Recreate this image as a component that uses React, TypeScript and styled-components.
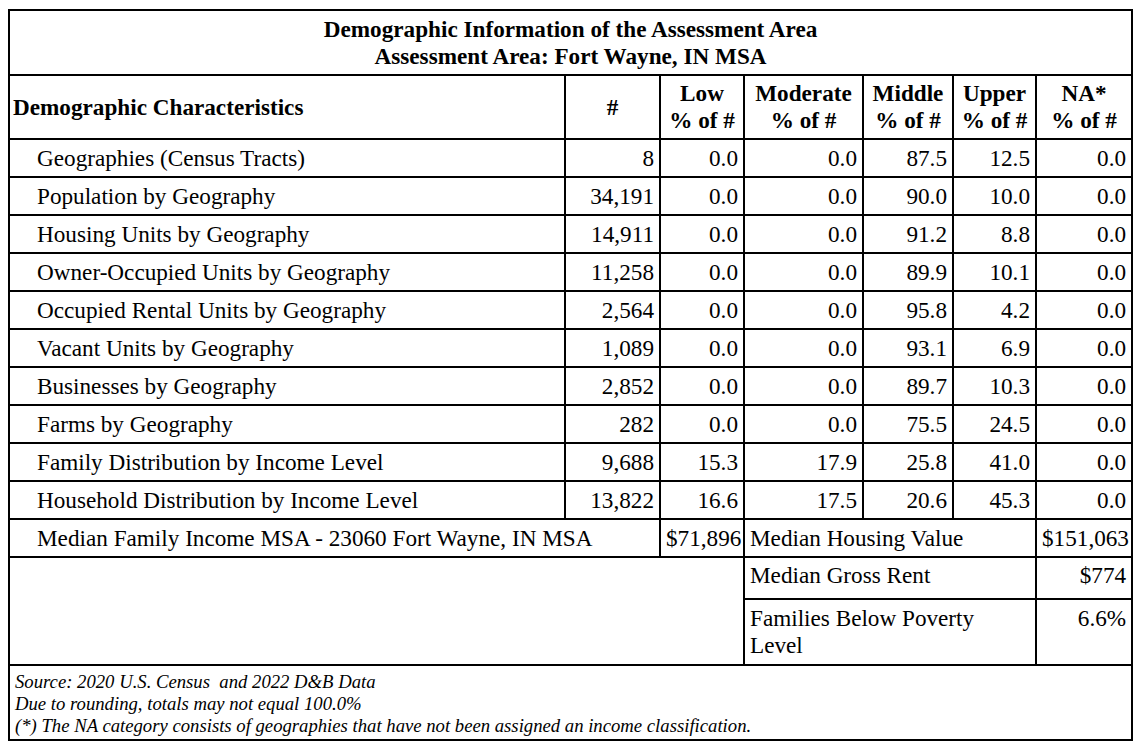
import React from "react";
import styled, { createGlobalStyle } from "styled-components";

const GlobalStyle = createGlobalStyle`
  html, body {
    margin: 0;
    padding: 0;
    background: #ffffff;
  }
  body {
    font-family: "Liberation Serif", "Times New Roman", serif;
    color: #000000;
  }
`;

const Page = styled.div`
  padding: 9px 0 0 8px;
`;

const Table = styled.table`
  border-collapse: collapse;
  table-layout: fixed;
  width: 1125px;
  font-family: "Liberation Serif", "Times New Roman", serif;
  font-size: 23.2px;
  color: #000;
  border: 2px solid #000;
`;

const Cell = styled.td<{
  $align?: "left" | "right" | "center";
  $valign?: "top" | "middle";
  $indent?: boolean;
  $top?: number;
}>`
  border: 2px solid #000;
  padding: ${(p) => (p.$valign === "top" ? `${p.$top ?? 4}px` : "0")} 5px 0
    ${(p) => (p.$indent ? "27px" : "5px")};
  text-align: ${(p) => p.$align ?? "left"};
  vertical-align: ${(p) => p.$valign ?? "middle"};
  line-height: normal;
  white-space: nowrap;
`;

const WrapCell = styled(Cell)`
  white-space: normal;
`;

const TitleCell = styled.th`
  border: 2px solid #000;
  font-weight: bold;
  text-align: center;
  vertical-align: middle;
  padding: 0;
`;

const HeadCell = styled.th<{ $align?: "left" | "center" }>`
  border: 2px solid #000;
  font-weight: bold;
  text-align: ${(p) => p.$align ?? "center"};
  vertical-align: middle;
  padding: 0 3px;
  white-space: nowrap;
`;

const Row = styled.tr<{ $h: number }>`
  height: ${(p) => p.$h}px;
`;

const FootCell = styled.td`
  border: 2px solid #000;
  padding: 5px 5px 0 5px;
  vertical-align: top;
  font-style: italic;
  font-size: 18.7px;
  line-height: 22px;
`;

const FootLine = styled.div`
  white-space: pre;
`;

type DataRow = [string, string, string, string, string, string, string];

const rows: DataRow[] = [
  ["Geographies (Census Tracts)", "8", "0.0", "0.0", "87.5", "12.5", "0.0"],
  ["Population by Geography", "34,191", "0.0", "0.0", "90.0", "10.0", "0.0"],
  ["Housing Units by Geography", "14,911", "0.0", "0.0", "91.2", "8.8", "0.0"],
  ["Owner-Occupied Units by Geography", "11,258", "0.0", "0.0", "89.9", "10.1", "0.0"],
  ["Occupied Rental Units by Geography", "2,564", "0.0", "0.0", "95.8", "4.2", "0.0"],
  ["Vacant Units by Geography", "1,089", "0.0", "0.0", "93.1", "6.9", "0.0"],
  ["Businesses by Geography", "2,852", "0.0", "0.0", "89.7", "10.3", "0.0"],
  ["Farms by Geography", "282", "0.0", "0.0", "75.5", "24.5", "0.0"],
  ["Family Distribution by Income Level", "9,688", "15.3", "17.9", "25.8", "41.0", "0.0"],
  ["Household Distribution by Income Level", "13,822", "16.6", "17.5", "20.6", "45.3", "0.0"],
];

const colWidths = [556, 95, 84, 119, 90, 83, 96];

const headers: [string, string][] = [
  ["Low", "% of #"],
  ["Moderate", "% of #"],
  ["Middle", "% of #"],
  ["Upper", "% of #"],
  ["NA*", "% of #"],
];

export default function App() {
  return (
    <>
      <GlobalStyle />
      <Page>
        <Table>
          <colgroup>
            {colWidths.map((w, i) => (
              <col key={i} style={{ width: w }} />
            ))}
          </colgroup>
          <thead>
            <Row $h={65}>
              <TitleCell colSpan={7}>
                Demographic Information of the Assessment Area
                <br />
                Assessment Area: Fort Wayne, IN MSA
              </TitleCell>
            </Row>
            <Row $h={64}>
              <HeadCell $align="left">Demographic Characteristics</HeadCell>
              <HeadCell>#</HeadCell>
              {headers.map(([a, b]) => (
                <HeadCell key={a}>
                  {a}
                  <br />
                  {b}
                </HeadCell>
              ))}
            </Row>
          </thead>
          <tbody>
            {rows.map((r) => (
              <Row $h={38} key={r[0]}>
                <Cell $indent>{r[0]}</Cell>
                {r.slice(1).map((v, i) => (
                  <Cell $align="right" key={i}>
                    {v}
                  </Cell>
                ))}
              </Row>
            ))}
            <Row $h={38}>
              <Cell $indent colSpan={2}>
                Median Family Income MSA - 23060 Fort Wayne, IN MSA
              </Cell>
              <Cell $align="right">$71,896</Cell>
              <Cell colSpan={3}>Median Housing Value</Cell>
              <Cell $align="right">$151,063</Cell>
            </Row>
            <Row $h={42}>
              <Cell colSpan={3} rowSpan={2} />
              <Cell colSpan={3} $valign="top">
                Median Gross Rent
              </Cell>
              <Cell $align="right" $valign="top">
                $774
              </Cell>
            </Row>
            <Row $h={66}>
              <WrapCell colSpan={3} $valign="top" $top={5}>
                Families Below Poverty
                <br />
                Level
              </WrapCell>
              <Cell $align="right" $valign="top" $top={5}>
                6.6%
              </Cell>
            </Row>
            <Row $h={75}>
              <FootCell colSpan={7}>
                <FootLine>Source: 2020 U.S. Census  and 2022 D&amp;B Data</FootLine>
                <FootLine>Due to rounding, totals may not equal 100.0%</FootLine>
                <FootLine>(*) The NA category consists of geographies that have not been assigned an income classification.</FootLine>
              </FootCell>
            </Row>
          </tbody>
        </Table>
      </Page>
    </>
  );
}
